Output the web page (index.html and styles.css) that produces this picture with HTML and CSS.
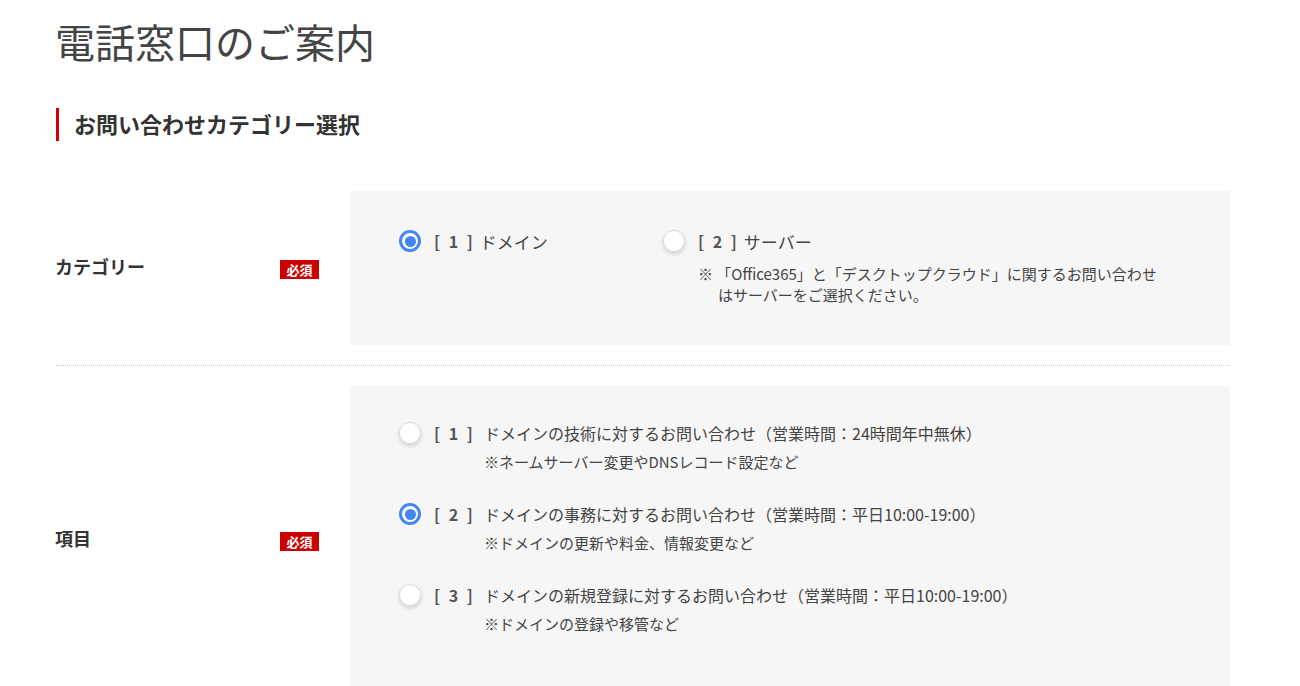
FILE: index.html
```html
<!DOCTYPE html>
<html lang="ja">
<head>
<meta charset="utf-8">
<title>電話窓口のご案内</title>
<link rel="stylesheet" href="styles.css">
</head>
<body>
<main class="page">
  <h1 class="title">電話窓口のご案内</h1>
  <h2 class="section-heading">お問い合わせカテゴリー選択</h2>

  <div class="row">
    <div class="row-label">
      <span class="label-text">カテゴリー</span>
      <span class="badge">必須</span>
    </div>
    <div class="row-body cat-body">
      <div class="cat-option cat-option-1">
        <div class="opt-line">
          <span class="radio checked"></span>
          <span class="num">[ 1 ]</span>
          <span class="cat-text">ドメイン</span>
        </div>
      </div>
      <div class="cat-option">
        <div class="opt-line">
          <span class="radio"></span>
          <span class="num">[ 2 ]</span>
          <span class="cat-text">サーバー</span>
        </div>
        <p class="cat-note">※ 「Office365」と「デスクトップクラウド」に関するお問い合わせ<br>はサーバーをご選択ください。</p>
      </div>
    </div>
  </div>

  <div class="row">
    <div class="row-label">
      <span class="label-text">項目</span>
      <span class="badge">必須</span>
    </div>
    <div class="row-body item-body">
      <div class="item">
        <span class="radio"></span>
        <span class="num item-num">[ 1 ]</span>
        <div class="item-text">
          <div class="item-main">ドメインの技術に対するお問い合わせ（営業時間：24時間年中無休）</div>
          <div class="item-sub">※ネームサーバー変更やDNSレコード設定など</div>
        </div>
      </div>
      <div class="item">
        <span class="radio checked"></span>
        <span class="num item-num">[ 2 ]</span>
        <div class="item-text">
          <div class="item-main">ドメインの事務に対するお問い合わせ（営業時間：平日10:00-19:00）</div>
          <div class="item-sub">※ドメインの更新や料金、情報変更など</div>
        </div>
      </div>
      <div class="item">
        <span class="radio"></span>
        <span class="num item-num">[ 3 ]</span>
        <div class="item-text">
          <div class="item-main">ドメインの新規登録に対するお問い合わせ（営業時間：平日10:00-19:00）</div>
          <div class="item-sub">※ドメインの登録や移管など</div>
        </div>
      </div>
    </div>
  </div>
</main>
</body>
</html>
```

FILE: styles.css
```css
html, body {
  margin: 0;
  padding: 0;
  background: #ffffff;
  overflow: hidden;
}

body {
  font-family: "Noto Sans CJK JP", "Noto Sans", sans-serif;
  color: #333333;
}

.page {
  width: 1174px;
  margin: 0 0 0 56px;
}

.title {
  margin: 17px 0 0 -1px;
  font-size: 40px;
  line-height: 48px;
  font-weight: 400;
  color: #444444;
}

.section-heading {
  margin: 43px 0 30px 0;
  padding: 0 0 3px 15px;
  border-left: 3px solid #d40000;
  font-size: 22px;
  line-height: 30px;
  font-weight: 700;
  color: #333333;
}

.row {
  display: flex;
  padding: 20px 0;
  border-bottom: 1px dotted #cfcfcf;
}

.row-label {
  width: 294px;
  padding-right: 31px;
  box-sizing: border-box;
  display: flex;
  align-items: center;
  justify-content: space-between;
}

.label-text {
  font-size: 18px;
  font-weight: 700;
  color: #333333;
  margin-left: -1px;
  padding-bottom: 4px;
}

.badge {
  width: 39px;
  height: 19px;
  display: flex;
  align-items: center;
  justify-content: center;
  background: #cc0000;
  color: #ffffff;
  font-size: 13px;
  font-weight: 700;
  line-height: 1;
  margin-top: 3px;
}

.row-body {
  flex: 1;
  background: #f6f6f6;
}

.cat-body {
  display: flex;
  padding: 38px 0 40px 49px;
}

.cat-option-1 {
  width: 264px;
}

.opt-line {
  display: flex;
  align-items: center;
  height: 24px;
}

.radio {
  flex: none;
  position: relative;
  width: 22px;
  height: 22px;
  box-sizing: border-box;
  border-radius: 50%;
  background: #ffffff;
  border: 1px solid #dddddd;
  box-shadow: 0 2px 4px rgba(0, 0, 0, 0.16);
}

.radio.checked {
  border: 3px solid #4285f4;
  box-shadow: none;
}

.radio.checked::after {
  content: "";
  position: absolute;
  left: 2.5px;
  top: 2.5px;
  width: 11px;
  height: 11px;
  border-radius: 50%;
  background: #4285f4;
}

.num {
  margin-left: 13px;
  font-size: 16px;
  font-weight: 700;
  color: #555555;
  word-spacing: 5px;
  white-space: nowrap;
}

.cat-text {
  margin-left: 7px;
  font-size: 17px;
  color: #444444;
}

.cat-note {
  margin: 10px 0 0 35px;
  padding-left: 20px;
  text-indent: -20px;
  font-size: 15px;
  line-height: 21px;
  color: #444444;
}

.item-body {
  padding: 35px 0 57px 49px;
  display: flex;
  flex-direction: column;
  gap: 28px;
}

.item {
  display: flex;
  align-items: flex-start;
}

.item .radio {
  margin-top: 1px;
}

.item-num {
  width: 36px;
  line-height: 24px;
}

.item-text {
  margin-left: 14px;
  color: #444444;
}

.item-main {
  font-size: 16px;
  line-height: 24px;
}

.item-sub {
  margin-top: 5px;
  font-size: 15px;
  line-height: 24px;
}
```
